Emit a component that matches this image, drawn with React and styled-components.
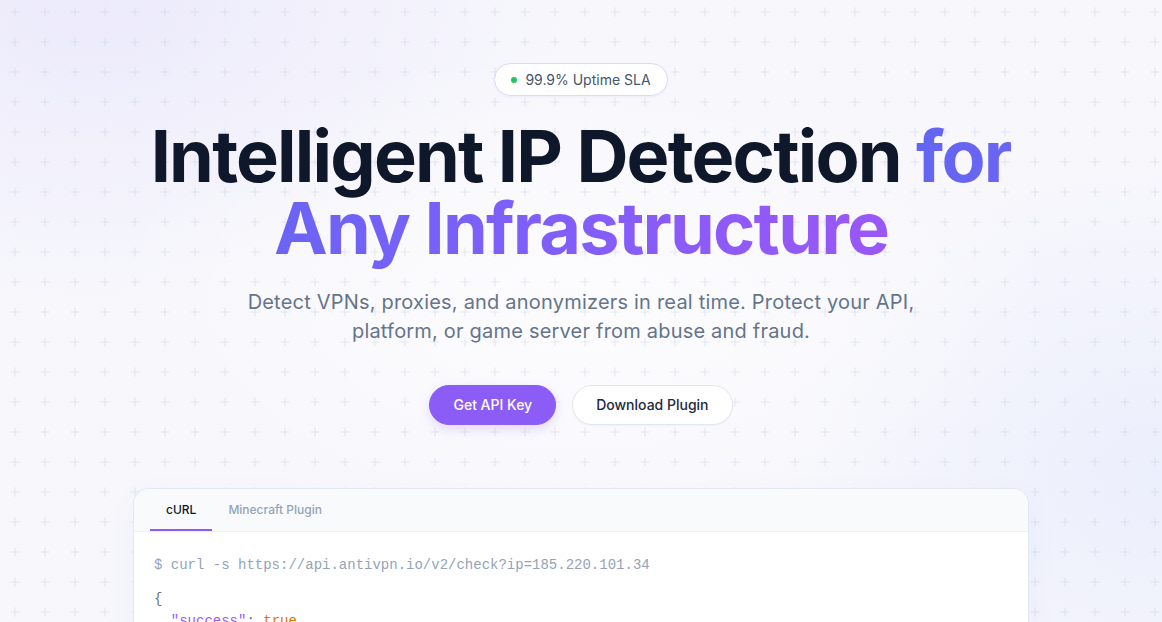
import React, { useState } from "react";
import styled, { createGlobalStyle } from "styled-components";

const GlobalStyle = createGlobalStyle`
  * { box-sizing: border-box; }
  html, body { margin: 0; padding: 0; }
  body {
    font-family: Inter, "Noto Sans", sans-serif;
    background: #f6f6fc;
    -webkit-font-smoothing: antialiased;
  }
`;

const plusSvg = encodeURIComponent(
  `<svg xmlns="http://www.w3.org/2000/svg" width="30" height="30"><path d="M15 10.5v9M10.5 15h9" stroke="#c3cadb" stroke-opacity="0.38" stroke-width="1.2" fill="none"/></svg>`
);

const Page = styled.div`
  position: relative;
  min-height: 622px;
  overflow: hidden;
  background-color: #f7f7fc;
  background-image:
    url("data:image/svg+xml,${plusSvg}"),
    radial-gradient(ellipse 60% 55% at 50% 45%, rgba(255, 255, 255, 0.7), rgba(255, 255, 255, 0) 70%),
    radial-gradient(ellipse 55% 60% at 8% 0%, rgba(139, 120, 246, 0.1), rgba(139, 120, 246, 0) 75%),
    radial-gradient(ellipse 45% 60% at 100% 70%, rgba(96, 140, 250, 0.08), rgba(96, 140, 250, 0) 75%);
  background-position: 0 -3px, 0 0, 0 0, 0 0;
  background-repeat: repeat, no-repeat, no-repeat, no-repeat;
`;

const Hero = styled.section`
  display: flex;
  flex-direction: column;
  align-items: center;
  padding: 63px 24px 0;
  text-align: center;
`;

const Badge = styled.div`
  display: inline-flex;
  align-items: center;
  gap: 8px;
  padding: 6px 16px 5px;
  border-radius: 999px;
  border: 1px solid #ddd8fb;
  background: rgba(255, 255, 255, 0.9);
  box-shadow: 0 1px 3px rgba(99, 102, 241, 0.08);
  font-size: 14px;
  line-height: 20px;
  color: #475569;
`;

const Dot = styled.span`
  width: 6px;
  height: 6px;
  border-radius: 50%;
  background: #22c55e;
`;

const Title = styled.h1`
  margin: 24px 0 0;
  max-width: 896px;
  font-size: 72px;
  line-height: 72px;
  font-weight: 700;
  letter-spacing: -0.025em;
  color: #0f172a;
`;

const Accent = styled.span`
  background-image: linear-gradient(90deg, #6366f1 0%, #7a60fa 40%, #9a57f7 100%);
  -webkit-background-clip: text;
  background-clip: text;
  color: transparent;
  -webkit-box-decoration-break: slice;
  box-decoration-break: slice;
`;

const Subtitle = styled.p`
  margin: 24px 0 0;
  max-width: 680px;
  font-size: 20px;
  line-height: 29px;
  letter-spacing: 0.2px;
  color: #64748b;
`;

const Actions = styled.div`
  display: flex;
  gap: 16px;
  margin-top: 39px;
`;

const Button = styled.button`
  font-family: inherit;
  font-size: 14px;
  line-height: 20px;
  font-weight: 500;
  padding: 9px 23px;
  border-radius: 999px;
  cursor: pointer;
  border: 1px solid ${(p) => (p.$primary ? "#8b5cf6" : "#e2e8f0")};
  background: ${(p) => (p.$primary ? "#8b5cf6" : "#ffffff")};
  color: ${(p) => (p.$primary ? "#ffffff" : "#1e293b")};
  box-shadow: ${(p) =>
    p.$primary ? "0 4px 12px rgba(139, 92, 246, 0.2)" : "0 1px 2px rgba(15, 23, 42, 0.04)"};
`;

const Card = styled.div`
  width: 896px;
  margin-top: 63px;
  border: 1px solid #e2e8f0;
  border-radius: 16px 16px 0 0;
  border-bottom: none;
  background: #ffffff;
  overflow: hidden;
  text-align: left;
  box-shadow: 0 10px 30px rgba(99, 102, 241, 0.05);
`;

const TabBar = styled.div`
  display: flex;
  padding: 0 16px;
  background: #f9fafc;
  border-bottom: 1px solid #eef1f5;
`;

const Tab = styled.button`
  font-family: inherit;
  font-size: 12px;
  line-height: 18px;
  font-weight: 500;
  padding: 12px 16px;
  border: none;
  background: transparent;
  cursor: pointer;
  color: ${(p) => (p.$active ? "#0f172a" : "#94a3b8")};
  box-shadow: ${(p) => (p.$active ? "inset 0 -2px 0 #8b5cf6" : "none")};
`;

const Code = styled.pre`
  margin: 0;
  padding: 22px 20px 20px;
  font-family: "Liberation Mono", "DejaVu Sans Mono", monospace;
  font-size: 14px;
  line-height: 22px;
  color: #64748b;
`;

const Line = styled.div`
  color: ${(p) => p.$color || "#64748b"};
  margin-bottom: ${(p) => p.$gap || 0}px;
`;

const Key = styled.span`
  color: #9b5cf6;
`;

const Val = styled.span`
  color: #d97706;
`;

export default function App() {
  const [tab, setTab] = useState("curl");
  return (
    <>
      <GlobalStyle />
      <Page>
        <Hero>
          <Badge>
            <Dot />
            99.9% Uptime SLA
          </Badge>
          <Title>
            Intelligent IP Detection <Accent>for Any Infrastructure</Accent>
          </Title>
          <Subtitle>
            Detect VPNs, proxies, and anonymizers in real time. Protect your API, platform, or game
            server from abuse and fraud.
          </Subtitle>
          <Actions>
            <Button $primary>Get API Key</Button>
            <Button>Download Plugin</Button>
          </Actions>
          <Card>
            <TabBar>
              <Tab $active={tab === "curl"} onClick={() => setTab("curl")}>
                cURL
              </Tab>
              <Tab $active={tab === "mc"} onClick={() => setTab("mc")}>
                Minecraft Plugin
              </Tab>
            </TabBar>
            <Code>
              <Line $color="#94a3b8" $gap={12}>
                $ curl -s https://api.antivpn.io/v2/check?ip=185.220.101.34
              </Line>
              <Line>{"{"}</Line>
              <Line>
                {"  "}
                <Key>"success"</Key>: <Val>true</Val>,
              </Line>
              <Line>
                {"  "}
                <Key>"ip"</Key>: <Val>"185.220.101.34"</Val>,
              </Line>
            </Code>
          </Card>
        </Hero>
      </Page>
    </>
  );
}
